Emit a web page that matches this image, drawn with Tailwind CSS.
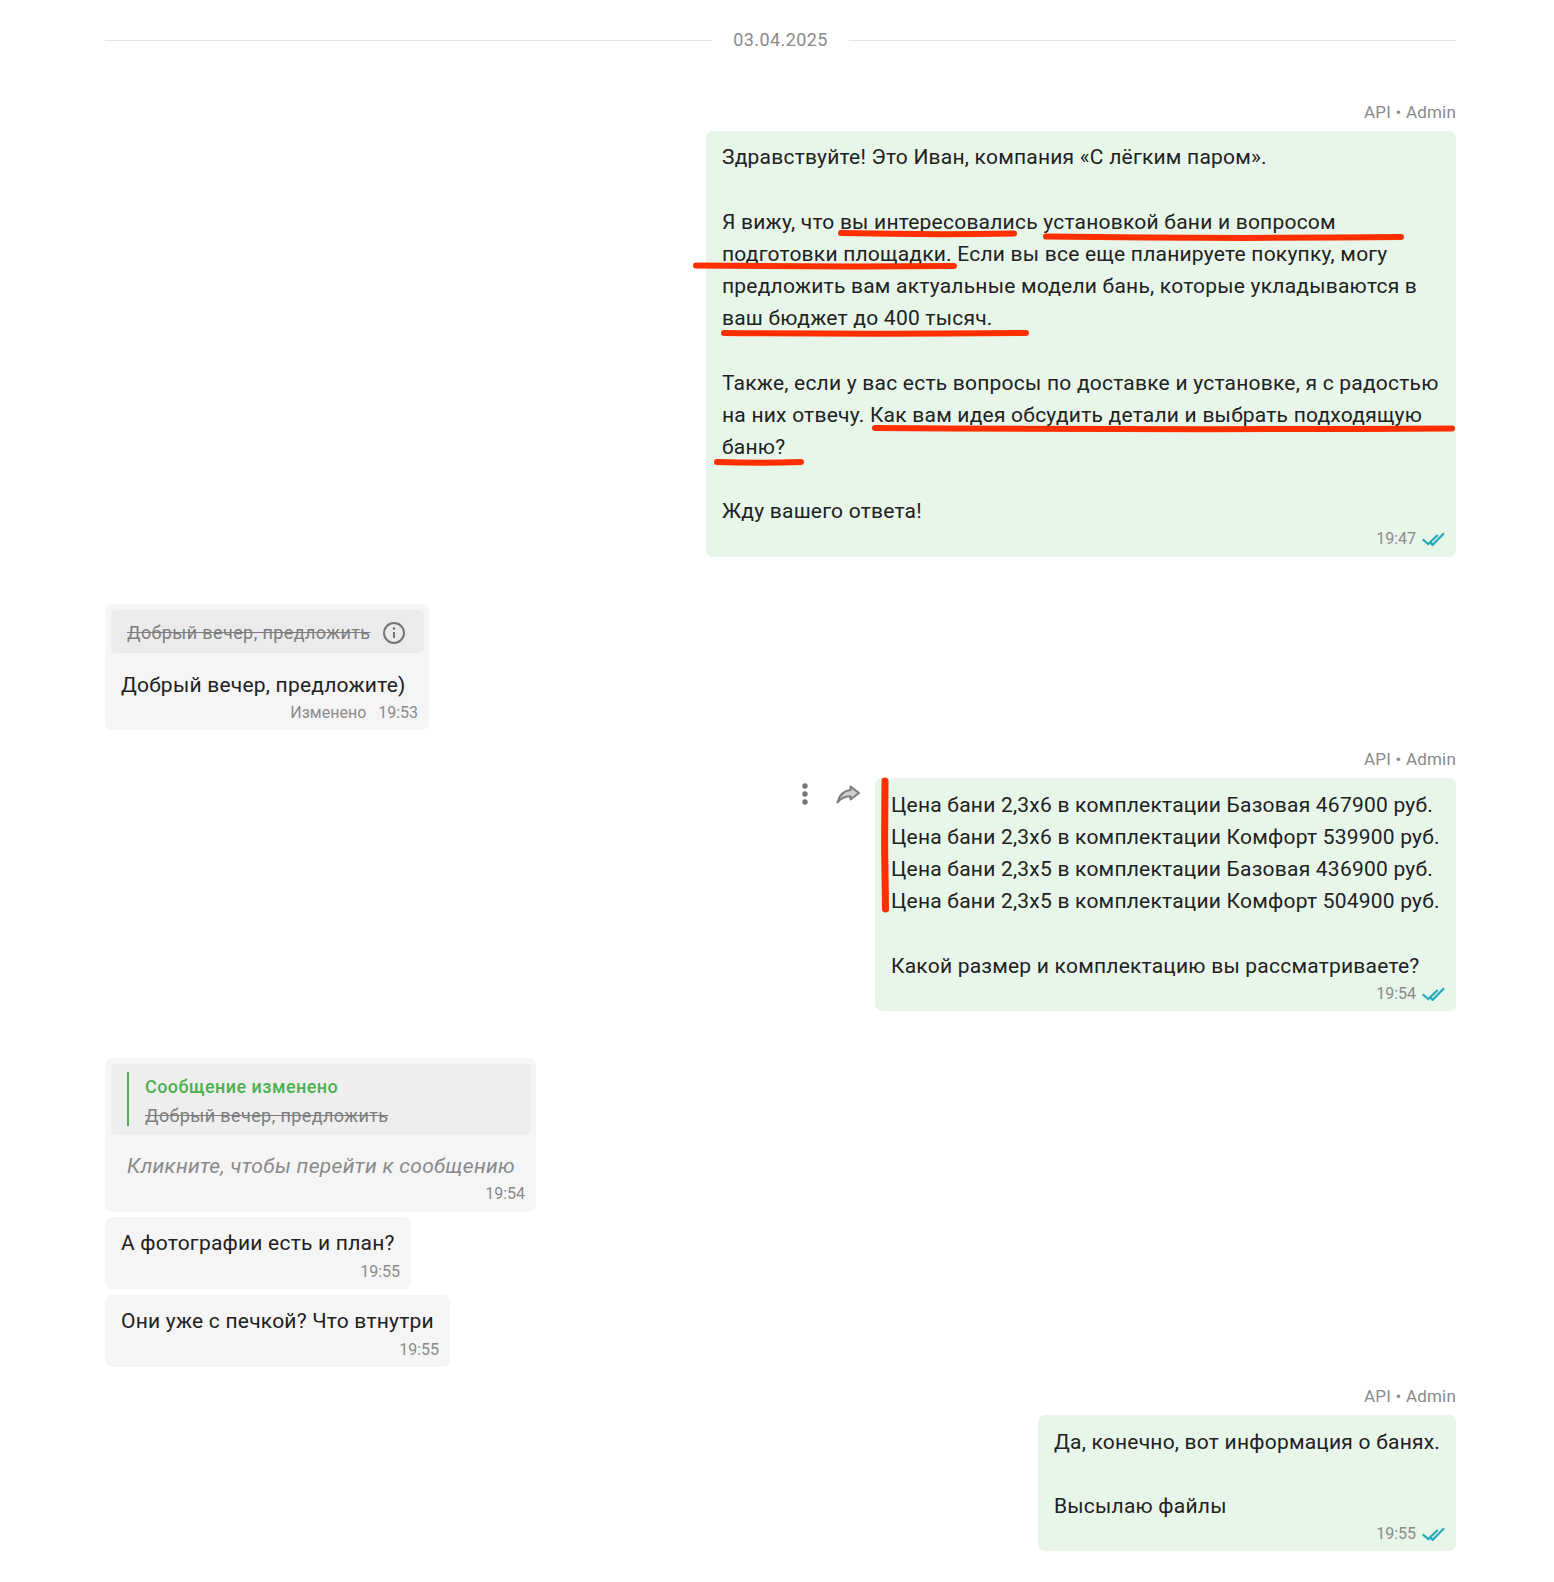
<!DOCTYPE html>
<html lang="en">
<head>
<meta charset="UTF-8">
<title>Chat</title>
<script src="https://cdn.jsdelivr.net/npm/@tailwindcss/browser@4"></script>
</head>
<body class="bg-white text-[#212121] font-['Roboto',sans-serif] text-[21px] leading-[32.2px] tracking-[0.22px]">
<div class="relative w-[1554px] h-[1582px] overflow-hidden pl-[105px] pr-[98px] pt-[27px]">

  <!-- date -->
  <div class="flex items-center h-[27px] gap-[21px]">
    <div class="flex-1 h-px bg-[#e4e4e4]"></div>
    <div class="text-[18px] leading-[27px] tracking-[0.4px] text-[#8a8a8a] mb-[2px]">03.04.2025</div>
    <div class="flex-1 h-px bg-[#e4e4e4]"></div>
  </div>

  <div class="text-right text-[17px] leading-[24px] tracking-[0.2px] text-[#8a8a8a] mt-[46px]">API • Admin</div>
  <div class="flex justify-end mt-[7px]">
    <div class="relative w-[750px] h-[426px] bg-[#e8f5e9] rounded-[7px] px-[16px] pt-[10px]">
      <p>Здравствуйте! Это Иван, компания «С лёгким паром».</p>
      <p class="mt-[32.6px]">Я вижу, что вы интересовались установкой бани и вопросом<br>подготовки площадки. Если вы все еще планируете покупку, могу<br>предложить вам актуальные модели бань, которые укладываются в<br>ваш бюджет до 400 тысяч.</p>
      <p class="mt-[32px]">Также, если у вас есть вопросы по доставке и установке, я с радостью<br>на них отвечу. Как вам идея обсудить детали и выбрать подходящую<br>баню?</p>
      <p class="mt-[32px]">Жду вашего ответа!</p>
      <div class="absolute right-[11px] bottom-[6px] flex items-center gap-[5px] text-[16px] leading-[24px] tracking-normal text-[#8a8a8a]">19:47<svg width="24" height="14" viewBox="0 0 24 14" fill="none" stroke="#26a8bd" stroke-width="2.2"><path d="M1.7 7.3l5.6 4.7 9.4-9M9 9.7l2.6 3.3L23 1.3"/></svg></div>
    </div>
  </div>

  <div class="flex mt-[47px]">
    <div class="w-[324px] h-[126px] bg-[#f5f5f5] rounded-[7px] pt-[6px] pl-[6px] pr-[5px]">
      <div class="h-[43px] bg-[#ebebeb] rounded-[5px] flex items-center pl-[16px] pt-[4px] text-[18px] tracking-[0.4px] text-[#7d7d7d]">
        <span class="line-through">Добрый вечер, предложить</span>
        <svg class="ml-[13px] -mt-[2px]" width="22" height="22" viewBox="0 0 22 22" fill="none" stroke="#757575" stroke-width="2"><circle cx="11" cy="11" r="10"/><path d="M11 10v6"/><circle cx="11" cy="6.5" r="1.3" fill="#757575" stroke="none"/></svg>
      </div>
      <div class="pl-[10px] mt-[16px]">Добрый вечер, предложите)</div>
      <div class="text-right text-[16px] leading-[22px] tracking-normal text-[#8a8a8a] pr-[6px] mt-[1px]">Изменено&nbsp;&nbsp;&nbsp;19:53</div>
    </div>
  </div>

  <div class="text-right text-[17px] leading-[24px] tracking-[0.2px] text-[#8a8a8a] mt-[17px]">API • Admin</div>
  <div class="flex justify-end items-start mt-[7px]">
    <svg class="mt-[5px]" width="6" height="24" viewBox="0 0 6 24" fill="#757575"><circle cx="3" cy="3" r="2.7"/><circle cx="3" cy="11" r="2.7"/><circle cx="3" cy="19" r="2.7"/></svg>
    <svg class="mt-[7px] ml-[28px] mr-[15px]" width="24" height="19" viewBox="0 0 24 19" fill="#cfcfcf" stroke="#7d7d7d" stroke-width="2" stroke-linejoin="round"><path d="M14.500 1.500L23 8l-8.500 6.500v-3.300C9 11.200 5 13 1.500 17.500 3 11 7 5.800 14.500 5z"/></svg>
    <div class="relative w-[581px] h-[233px] bg-[#e8f5e9] rounded-[7px] px-[16px] pt-[10.6px]">
      <p>Цена бани 2,3х6 в комплектации Базовая 467900 руб.<br>Цена бани 2,3х6 в комплектации Комфорт 539900 руб.<br>Цена бани 2,3х5 в комплектации Базовая 436900 руб.<br>Цена бани 2,3х5 в комплектации Комфорт 504900 руб.</p>
      <p class="mt-[32.4px]">Какой размер и комплектацию вы рассматриваете?</p>
      <div class="absolute right-[11px] bottom-[5px] flex items-center gap-[5px] text-[16px] leading-[24px] tracking-normal text-[#8a8a8a]">19:54<svg width="24" height="14" viewBox="0 0 24 14" fill="none" stroke="#26a8bd" stroke-width="2.2"><path d="M1.7 7.3l5.6 4.7 9.4-9M9 9.7l2.6 3.3L23 1.3"/></svg></div>
    </div>
  </div>

  <div class="flex mt-[47px]">
    <div class="w-[431px] h-[154px] bg-[#f5f5f5] rounded-[7px] pt-[6px] pl-[6px] pr-[5px]">
      <div class="h-[71px] bg-[#eeeeee] rounded-[5px] pl-[16px] pt-[11px]">
        <div class="relative pl-[18px] h-[54px] text-[18px] leading-[29px]">
          <div class="absolute left-0 top-0 bottom-0 w-[2px] bg-[#4caf50]"></div>
          <div class="font-medium text-[#4caf50] tracking-[0.45px] -mt-[3px]">Сообщение изменено</div>
          <div class="line-through text-[#7d7d7d] tracking-[0.4px]">Добрый вечер, предложить</div>
        </div>
      </div>
      <div class="italic text-[#8a8a8a] tracking-[0.32px] pl-[16px] mt-[15px]">Кликните, чтобы перейти к сообщению</div>
      <div class="text-right text-[16px] leading-[22px] tracking-normal text-[#8a8a8a] pr-[6px] mt-[1px]">19:54</div>
    </div>
  </div>

  <div class="flex mt-[5px]">
    <div class="w-[306px] h-[72px] bg-[#f5f5f5] rounded-[7px] pl-[16px] pr-[11px] pt-[10px]">
      <div>А фотографии есть и план?</div>
      <div class="text-right text-[16px] leading-[22px] tracking-normal text-[#8a8a8a] mt-[2px]">19:55</div>
    </div>
  </div>

  <div class="flex mt-[6px]">
    <div class="w-[345px] h-[72px] bg-[#f5f5f5] rounded-[7px] pl-[16px] pr-[11px] pt-[10px]">
      <div>Они уже с печкой? Что втнутри</div>
      <div class="text-right text-[16px] leading-[22px] tracking-normal text-[#8a8a8a] mt-[2px]">19:55</div>
    </div>
  </div>

  <div class="text-right text-[17px] leading-[24px] tracking-[0.2px] text-[#8a8a8a] mt-[17px]">API • Admin</div>
  <div class="flex justify-end mt-[7px]">
    <div class="relative w-[418px] h-[136px] bg-[#e8f5e9] rounded-[7px] pl-[16px] pt-[11px] whitespace-nowrap">
      <p>Да, конечно, вот информация о банях.</p>
      <p class="mt-[32px]">Высылаю файлы</p>
      <div class="absolute right-[11px] bottom-[5px] flex items-center gap-[5px] text-[16px] leading-[24px] tracking-normal text-[#8a8a8a]">19:55<svg width="24" height="14" viewBox="0 0 24 14" fill="none" stroke="#26a8bd" stroke-width="2.2"><path d="M1.7 7.3l5.6 4.7 9.4-9M9 9.7l2.6 3.3L23 1.3"/></svg></div>
    </div>
  </div>

  <!-- red marker strokes drawn over the screenshot -->
  <svg class="absolute left-0 top-0 pointer-events-none" width="1554" height="1582" viewBox="0 0 1554 1582" fill="none" stroke="#ff2f00" stroke-linecap="round" stroke-width="6">
    <path d="M841 233Q930 235 1014 233.5"/>
    <path d="M1046 236.5Q1230 239 1401 237"/>
    <path d="M696 265.500Q830 267 954 266"/>
    <path d="M724 333Q880 334.500 1026 333"/>
    <path d="M875 428Q1170 430 1452 428.500"/>
    <path d="M717 462Q760 463.500 801 462"/>
    <path stroke-width="7" d="M885 781Q884 845 885.500 909"/>
  </svg>
</div>
</body>
</html>
